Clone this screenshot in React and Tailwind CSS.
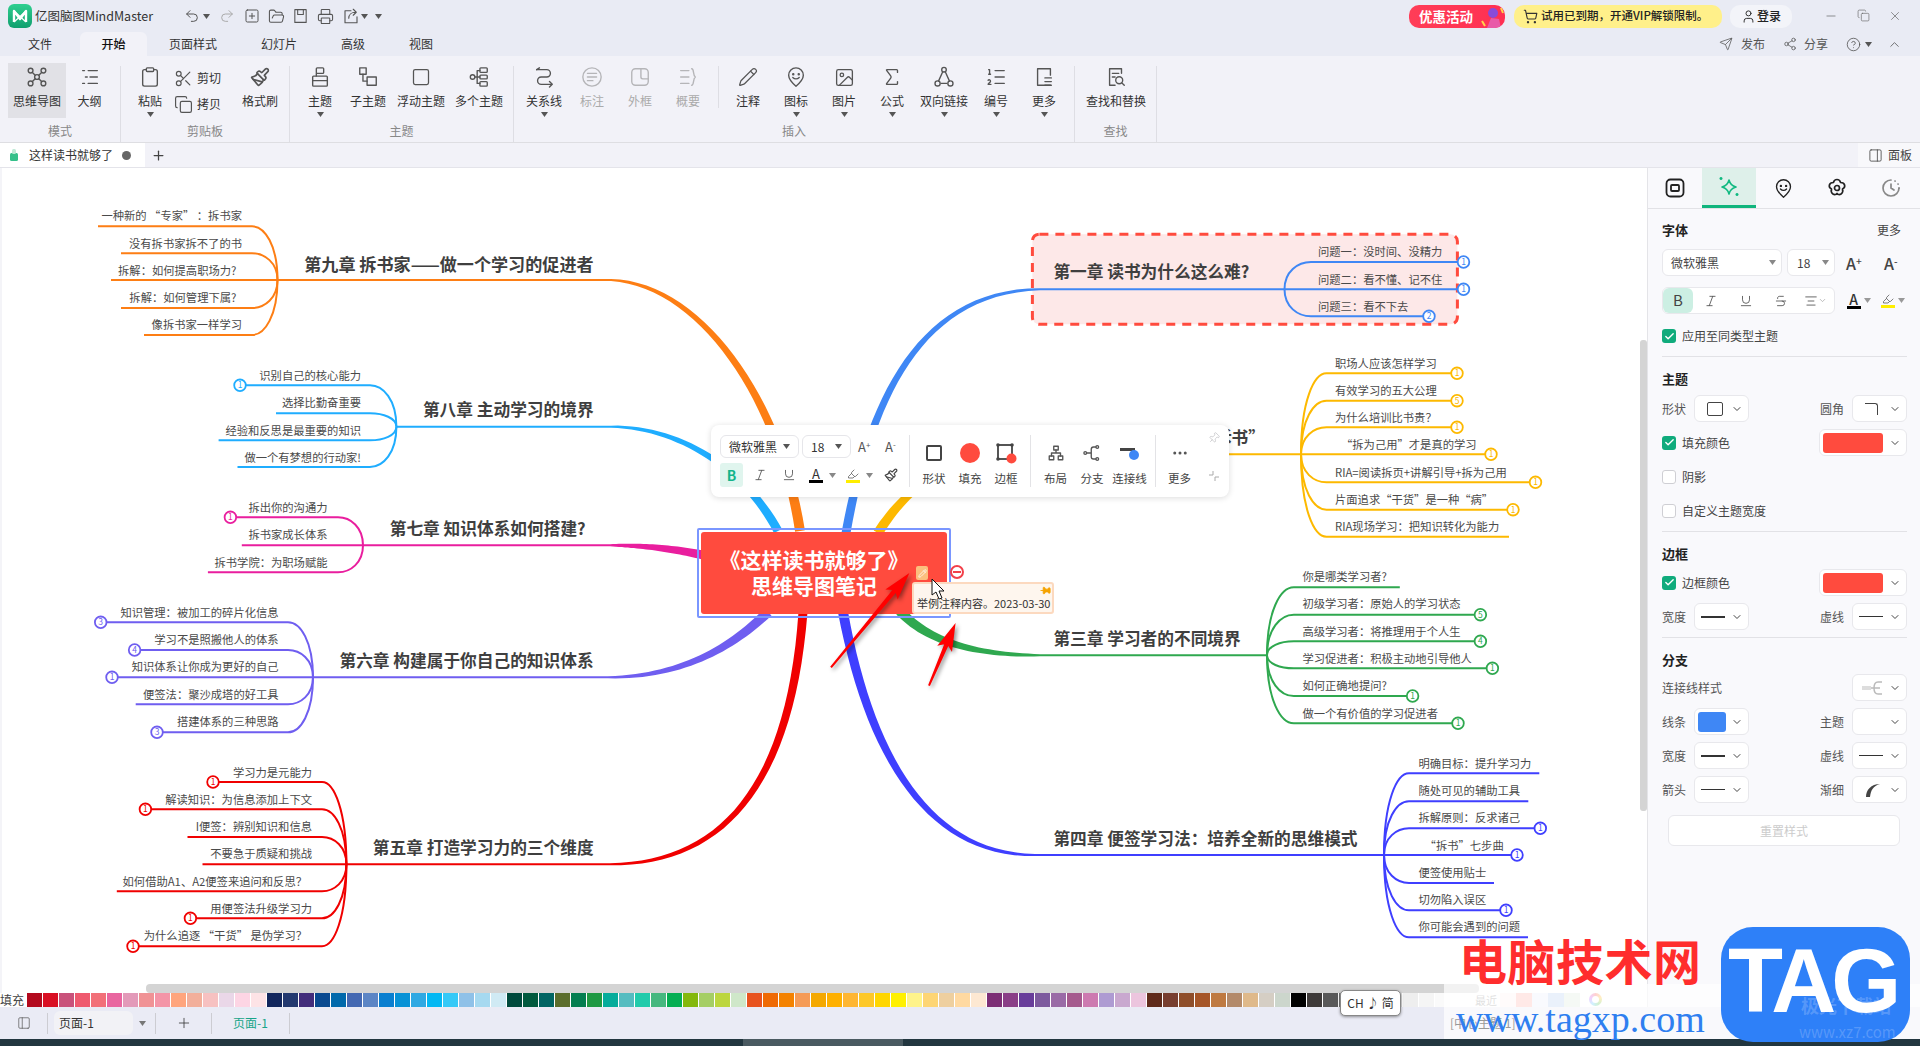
import React from "react";
import {
  Undo2, Redo2, SquarePlus, FolderOpen, Printer, Scissors, Copy, Clipboard, Square, Image, Sigma, ListOrdered, Pencil,
  Send, Share2, CircleHelp, ChevronUp, ChevronDown, Minus, X, User, ShoppingCart, Plus, Italic, Underline, Strikethrough,
  AlignCenter, Pin, MoreHorizontal, PanelRight, Check, Paintbrush, Highlighter,
} from "lucide-react";

const S = ({ size = 22, children, className = "", sw = 1.5 }) => (
  <svg width={size} height={size} viewBox="0 0 24 24" fill="none" stroke="currentColor" strokeWidth={sw} strokeLinecap="round" strokeLinejoin="round" className={className}>
    {children}
  </svg>
);

const Caret = ({ className = "text-[#555]" }) => (
  <svg width="7" height="5" viewBox="0 0 7 5" className={className}><path d="M0 0h7L3.5 5z" fill="currentColor" /></svg>
);

const MapIcon = () => <S><circle cx="5" cy="5" r="2.6" /><circle cx="19" cy="5" r="2.6" /><circle cx="5" cy="19" r="2.6" /><circle cx="19" cy="19" r="2.6" /><circle cx="12" cy="12" r="2.6" /><path d="M7 7l3 3M17 7l-3 3M7 17l3-3M17 17l-3-3" /></S>;
const OutlineIcon = () => <S><path d="M4 5h2M10 5h10M7 12h2M12 12h8M4 19h2M10 19h10" /></S>;
const ThemeIcon = () => <S><rect x="8" y="2" width="8" height="6" rx="1" /><rect x="4" y="11" width="16" height="11" rx="1" /><path d="M8 8v3M4 16h16" /></S>;
const SubIcon = () => <S><rect x="3" y="2" width="7" height="7" /><rect x="11" y="12" width="10" height="9" /><path d="M6.5 9v7.5H11" /></S>;
const MultiIcon = () => <S><rect x="13" y="2" width="8" height="5" rx="1" /><rect x="13" y="17" width="8" height="5" rx="1" /><circle cx="5" cy="12" r="2.5" /><rect x="13" y="10" width="8" height="4" rx="1" /><path d="M7.5 12H13M10 12V5h3M10 12v7h3" /></S>;
const RelIcon = () => <S><path d="M4 4h11a4 4 0 0 1 0 8H9a4 4 0 0 0 0 8h11" /><path d="M4 4l3-2M18 17l3 3-3 3" /></S>;
const CalloutIcon = () => <S><circle cx="12" cy="12" r="10" /><path d="M7 8h10M7 12h10M7 16h6" /></S>;
const BoundIcon = () => <S><rect x="3" y="3" width="18" height="18" rx="4" /><path d="M21 14h-6a2 2 0 0 1-2-2V3" /></S>;
const SummaryIcon = () => <S><path d="M4 5h9M4 12h9M4 19h9M16 3c3 0 1 7 4 9-3 2-1 9-4 9" /></S>;
const PinSmile = ({ size = 22 }) => <S size={size}><path d="M12 22S4 15 4 10a8 8 0 0 1 16 0c0 5-8 12-8 12z" /><circle cx="9" cy="9" r=".6" fill="currentColor" /><circle cx="15" cy="9" r=".6" fill="currentColor" /><path d="M8.5 12.5c2 2 5 2 7 0" /></S>;
const LinkIcon = () => <S><circle cx="12" cy="4" r="2.5" /><circle cx="5" cy="19" r="2.8" /><circle cx="19" cy="19" r="2.8" /><path d="M10.5 6.5L6 16.5M13.5 6.5L18 16.5M9 19h6" /></S>;
const MoreDoc = () => <S><path d="M19 21H5V3h14v7" /><path d="M13 13h7M13 17h7M13 21h7" /></S>;
const FindIcon = () => <S><path d="M18 8V3H5v18h6" /><path d="M8 8h7M8 12h3" /><circle cx="15.5" cy="15.5" r="3.8" /><path d="M18.5 18.5L21 21" /></S>;
const SaveIcon = () => <S size={18}><path d="M4 3h16v18H4z" /><path d="M8 3v7h8V3" /></S>;
const ExportIcon = () => <S size={18}><path d="M20 13v8H4V5h8" /><path d="M9 15c0-5 4-8 9-8M15 3l4 4-4 4" /></S>;

const Logo = () => (
  <div className="w-[24px] h-[24px] rounded-[6px] bg-gradient-to-b from-[#2fcf8f] to-[#0f9f6e] flex items-center justify-center">
    <svg width="18" height="18" viewBox="0 0 18 18" fill="none" stroke="#fff" strokeWidth="2.4" strokeLinejoin="round"><path d="M3 15V4l6 8 6-8v11" /><path d="M3 4l12 11M15 4L3 15" strokeWidth="1.2" /></svg>
  </div>
);

const RItem = ({ icon, label, w = 48, caret, gray }) => (
  <div className={`flex flex-col items-center shrink-0 ${gray ? "text-[#b5b5b8]" : "text-[#4a4a4a]"}`} style={{ width: w }}>
    <div className="h-[22px] mt-[3px] flex items-center justify-center text-[#555]" style={gray ? { color: "#b5b5b8" } : undefined}>{icon}</div>
    <div className={`text-[12px] leading-[16px] mt-[5px] whitespace-nowrap ${gray ? "text-[#aaa]" : "text-[#333]"}`}>{label}</div>
    {caret && <div className="mt-[3px] h-[5px] flex"><Caret /></div>}
  </div>
);

const Section = ({ w, label, children, last }) => (
  <div className={`h-[76px] shrink-0 flex flex-col justify-between ${last ? "" : "border-r border-[#dedee4]"}`} style={{ width: w }}>
    <div className="flex -mt-[3px] h-[60px]">{children}</div>
    <div className="text-center text-[12px] leading-[16px] text-[#888] pb-[3px]">{label}</div>
  </div>
);

const Ribbon = () => (
  <div className="h-[87px] bg-[#f2f2f8] border-b border-[#dedee2] pt-[10px] flex shrink-0">
    <Section w={121} label="模式">
      <div className="ml-[8px] w-[58px] h-[55px] bg-[#e1e1e6] flex justify-center"><RItem w={58} icon={<MapIcon />} label="思维导图" /></div>
      <RItem w={47} icon={<OutlineIcon />} label="大纲" />
    </Section>
    <Section w={169} label="剪贴板">
      <div className="ml-[5px] flex">
        <RItem icon={<Clipboard size={22} strokeWidth={1.5} />} label="粘贴" caret />
        <div className="w-[62px] flex flex-col text-[12px] text-[#333]">
          <div className="flex items-center gap-[4px] h-[26px] mt-[2px]"><Scissors size={19} strokeWidth={1.5} className="text-[#555]" /><span>剪切</span></div>
          <div className="flex items-center gap-[4px] h-[26px]"><Copy size={19} strokeWidth={1.5} className="text-[#555]" /><span>拷贝</span></div>
        </div>
        <RItem icon={<Paintbrush size={20} strokeWidth={2} />} label="格式刷" />
      </div>
    </Section>
    <Section w={224} label="主题">
      <div className="ml-[6px] flex">
        <RItem icon={<ThemeIcon />} label="主题" caret />
        <RItem icon={<SubIcon />} label="子主题" />
        <RItem w={58} icon={<Square size={20} strokeWidth={1.5} />} label="浮动主题" />
        <RItem w={58} icon={<MultiIcon />} label="多个主题" />
      </div>
    </Section>
    <Section w={561} label="插入">
      <div className="ml-[6px] flex">
        <RItem icon={<RelIcon />} label="关系线" caret />
        <RItem gray icon={<CalloutIcon />} label="标注" />
        <RItem gray icon={<BoundIcon />} label="外框" />
        <RItem gray icon={<SummaryIcon />} label="概要" />
        <div className="w-[12px] flex justify-center"><div className="w-px h-[42px] mt-[3px] bg-[#dedee4]" /></div>
        <RItem icon={<Pencil size={20} strokeWidth={1.5} />} label="注释" />
        <RItem icon={<PinSmile />} label="图标" caret />
        <RItem icon={<Image size={21} strokeWidth={1.5} />} label="图片" caret />
        <RItem icon={<Sigma size={22} strokeWidth={1.5} />} label="公式" caret />
        <RItem w={56} icon={<LinkIcon />} label="双向链接" caret />
        <RItem icon={<ListOrdered size={22} strokeWidth={1.5} />} label="编号" caret />
        <RItem icon={<MoreDoc />} label="更多" caret />
      </div>
    </Section>
    <Section w={82} label="查找">
      <RItem w={82} icon={<FindIcon />} label="查找和替换" />
    </Section>
  </div>
);

const TitleBar = () => (
  <div className="h-[32px] flex items-center shrink-0">
    <div className="ml-[8px]"><Logo /></div>
    <span className="ml-[3px] text-[12.5px] text-[#333] whitespace-nowrap">亿图脑图MindMaster</span>
    <div className="ml-[31px] flex items-center text-[#555]">
      <Undo2 size={16} strokeWidth={1.5} />
      <span className="ml-[3px]"><Caret /></span>
      <Redo2 size={16} strokeWidth={1.5} className="ml-[9px] text-[#aaa]" />
      <SquarePlus size={16} strokeWidth={1.5} className="ml-[9px]" />
      <FolderOpen size={17} strokeWidth={1.5} className="ml-[8px]" />
      <span className="ml-[7px] flex w-[17px]"><SaveIcon /></span>
      <Printer size={17} strokeWidth={1.5} className="ml-[8px]" />
      <span className="ml-[8px] flex"><ExportIcon /></span>
      <span className="ml-[1px]"><Caret /></span>
      <span className="ml-[7px]"><Caret /></span>
    </div>
    <div className="ml-auto flex items-center h-[23px]">
      <div className="w-[96px] h-[23px] rounded-[10px] bg-gradient-to-r from-[#ff3d57] to-[#ff2f52] flex items-center pl-[10px] relative overflow-hidden">
        <span className="text-[13.5px] font-bold text-white whitespace-nowrap">优惠活动</span>
        <svg width="26" height="23" viewBox="0 0 26 23" className="absolute right-0 top-0"><circle cx="14" cy="8" r="5" fill="#8a4bd8" /><path d="M8 23l4-10 8 1 2 9z" fill="#e85aa8" /><path d="M3 16l3 5M22 3l2 5" stroke="#ffd24a" strokeWidth="2" /></svg>
      </div>
      <div className="ml-[9px] w-[208px] h-[23px] rounded-[10px] bg-[#fff08a] flex items-center pl-[9px]">
        <ShoppingCart size={15} strokeWidth={1.8} className="text-[#333]" />
        <span className="ml-[3px] text-[11.5px] font-medium text-[#222] whitespace-nowrap">试用已到期，开通VIP解锁限制。</span>
      </div>
      <div className="ml-[8px] w-[62px] h-[23px] rounded-[10px] bg-[#f3f4f9] flex items-center justify-center gap-[1px]">
        <User size={15} strokeWidth={1.6} className="text-[#333]" />
        <span className="text-[12px] font-medium text-[#222]">登录</span>
      </div>
      <div className="ml-[23px] flex text-[#666]">
        <div className="w-[32px] flex justify-center"><Minus size={14} strokeWidth={1.2} /></div>
        <div className="w-[32px] flex justify-center"><Copy size={13} strokeWidth={1.2} /></div>
        <div className="w-[32px] flex justify-center"><X size={14} strokeWidth={1.2} /></div>
      </div>
      <div className="w-[9px]" />
    </div>
  </div>
);

const TabRow = () => {
  const tabs = [["文件", 80], ["开始", 67, 1], ["页面样式", 92], ["幻灯片", 80], ["高级", 68], ["视图", 68]];
  return (
    <div className="h-[24px] flex shrink-0 text-[12px] text-[#333]">
      {tabs.map(([t, w, a]) => (
        <div key={t} className={`flex items-center justify-center ${a ? "bg-[#f2f2f8] rounded-t-[6px] font-medium text-[#111]" : ""}`} style={{ width: w }}>{t}</div>
      ))}
      <div className="ml-auto flex items-center text-[#555] pr-[18px]">
        <Send size={14} strokeWidth={1.3} />
        <span className="ml-[8px] w-[24px] whitespace-nowrap">发布</span>
        <Share2 size={14} strokeWidth={1.3} className="ml-[18px]" />
        <span className="ml-[7px] w-[24px] whitespace-nowrap">分享</span>
        <CircleHelp size={15} strokeWidth={1.3} className="ml-[18px]" />
        <span className="ml-[4px]"><Caret /></span>
        <ChevronUp size={15} strokeWidth={1.3} className="ml-[15px]" />
      </div>
    </div>
  );
};

const DocTabs = () => (
  <div className="h-[25px] bg-[#f2f2f8] border-b border-[#e4e4ea] flex shrink-0">
    <div className="w-[145px] bg-white flex items-center pl-[10px] text-[12px] text-[#333]">
      <svg width="8" height="12" viewBox="0 0 8 12"><rect x="0" y="4" width="8" height="8" rx="1.5" fill="#35c08a" /><rect x="2" y="0" width="4" height="5" rx="1.5" fill="#bfe9d6" /></svg>
      <span className="ml-[11px] whitespace-nowrap">这样读书就够了</span>
      <span className="ml-[9px] w-[9px] h-[9px] rounded-full bg-[#666]" />
    </div>
    <div className="ml-[6px] flex items-center text-[#444]"><Plus size={15} strokeWidth={2} /></div>
    <div className="ml-auto w-[62px] bg-[#f8f8fb] flex items-center pl-[10px] gap-[5px] text-[12px] text-[#444]">
      <PanelRight size={15} strokeWidth={1.3} />
      <span>面板</span>
    </div>
  </div>
);

/* ---------- mind map ---------- */

const BR = [
  { c: "#fd7e14", title: "第九章 拆书家——做一个学习的促进者", fs: 17.1, tr: 593.6, tcy: 265, j: 277.5, s: 252, ty: 281, L: 1, te: 611, tw: 10, cb: [[611, 281], [700, 285], [780, 400], [800, 532]], text: 242,
    subs: [[227.3, 98, 0, "一种新的 “专家” ：拆书家", 216], [254.3, 121, 0, "没有拆书家拆不了的书", 244], [281, 111, 0, "拆解：如何提高职场力?", 271, 236.4], [309, 121, 0, "拆解：如何管理下属?", 297.7, 236.4], [336, 144, 0, "像拆书家一样学习", 325]] },
  { c: "#1fadff", title: "第八章 主动学习的境界", tr: 593.6, tcy: 410, j: 396.4, s: 370, ty: 427.7, L: 1, te: 611, tw: 9, cb: [[611, 427.7], [680, 428], [745, 470], [778, 532]], text: 361,
    subs: [[386.3, 240, 1, "识别自己的核心能力", 376], [414.3, 276, 0, "选择比勤奋重要", 402.7], [441.3, 218.6, 0, "经验和反思是最重要的知识", 430.7], [468, 237.5, 0, "做一个有梦想的行动家!", 458]] },
  { c: "#e91e9e", title: "第七章 知识体系如何搭建?", tr: 585.7, tcy: 529.3, j: 363, s: 338, ty: 546.3, L: 1, te: 610, tw: 9, cb: [[610, 546.3], [640, 546.3], [670, 549], [703, 556]], text: 327.5,
    subs: [[518.3, 230.4, 1, "拆出你的沟通力", 508], [546.3, 241.8, 0, "拆书家成长体系", 535], [573.3, 207.9, 0, "拆书学院：为职场赋能", 562.7]] },
  { c: "#6f5ef0", title: "第六章 构建属于你自己的知识体系", tr: 593.6, tcy: 661, j: 313, s: 288, ty: 678.3, L: 1, te: 608, tw: 10, cb: [[608, 678.3], [680, 678], [730, 650], [768, 613]], text: 278.6,
    subs: [[623.3, 100.7, 3, "知识管理：被加工的碎片化信息", 612.7], [651, 134.6, 4, "学习不是照搬他人的体系", 640], [678.3, 112, 1, "知识体系让你成为更好的自己", 667.3], [705.3, 135.7, 0, "便签法：聚沙成塔的好工具", 695], [733.3, 157, 3, "搭建体系的三种思路", 722]] },
  { c: "#f00000", title: "第五章 打造学习力的三个维度", tr: 593.6, tcy: 848.3, j: 346.4, s: 322, ty: 865.3, L: 1, te: 610, tw: 9, cb: [[610, 865.3], [720, 865], [790, 790], [803, 613]], text: 312,
    subs: [[783, 213, 1, "学习力是元能力", 773], [810.3, 145.4, 1, "解读知识：为信息添加上下文", 800], [838, 187.5, 0, "I便签：辨别知识和信息", 827], [865.3, 202.5, 0, "不要急于质疑和挑战", 854], [892.3, 116.8, 0, "如何借助A1、A2便签来追问和反思？", 882, 307], [919.3, 190.4, 1, "用便签法升级学习力", 909], [947.3, 133, 1, "为什么追逐 “干货” 是伪学习？", 936, 307]] },
  { c: "#3f87f5", title: "第一章 读书为什么这么难?", tl: 1053.4, tcy: 271.7, j: 1284.5, s: 1311, ty: 290.3, te: 1040, tw: 9, cb: [[1040, 290.3], [920, 292], [870, 400], [846, 534]], text: 1318,
    subs: [[263, 1463.5, 1, "问题一：没时间、没精力", 252], [290.3, 1463.5, 1, "问题二：看不懂、记不住", 280], [317.3, 1429, 2, "问题三：看不下去", 307]] },
  { c: "#fdb900", title: "第二章 职场人如何“拆书”", tr: 1265, tcy: 438.3, j: 1301, s: 1326.5, ty: 455.3, te: 1010, tw: 10, cb: [[1010, 455.3], [950, 456], [905, 490], [878, 534]], text: 1335,
    subs: [[374.3, 1457, 1, "职场人应该怎样学习", 363.7], [401.7, 1457, 5, "有效学习的五大公理", 391], [428.3, 1457, 1, "为什么培训比书贵？", 418], [455.3, 1491, 1, "“拆为己用”才是真的学习", 445, 1341], [483.3, 1535.5, 1, "RIA=阅读拆页+讲解引导+拆为己用", 473], [510.7, 1513, 1, "片面追求“干货”是一种“病”", 500], [537.7, 1509, 0, "RIA现场学习：把知识转化为能力", 527]] },
  { c: "#2fa84f", title: "第三章 学习者的不同境界", tl: 1053.4, tcy: 639.3, j: 1267, s: 1293.8, ty: 656.3, te: 1040, tw: 10, cb: [[1040, 656.3], [980, 656], [930, 645], [900, 612]], text: 1302.4,
    subs: [[588.3, 1399.8, 0, "你是哪类学习者?", 577], [615.7, 1480.4, 5, "初级学习者：原始人的学习状态", 604], [642.3, 1480.4, 4, "高级学习者：将推理用于个人生", 632], [669.3, 1492.4, 1, "学习促进者：积极主动地引导他人", 659], [697, 1412.6, 1, "如何正确地提问?", 686], [724.3, 1458, 1, "做一个有价值的学习促进者", 714]] },
  { c: "#3f3fff", title: "第四章 便签学习法：培养全新的思维模式", tl: 1053.4, tcy: 839, j: 1384, s: 1409, ty: 856, te: 1035, tw: 10, cb: [[1035, 856], [930, 856], [870, 760], [843, 613]], text: 1418.4,
    subs: [[774.3, 1539.3, 0, "明确目标：提升学习力", 764], [802.3, 1528.3, 0, "随处可见的辅助工具", 791], [829.3, 1540.3, 1, "拆解原则：反求诸己", 818], [856, 1517, 1, "“拆书”七步曲", 846, 1424.6], [884, 1494, 0, "便签使用贴士", 873], [911.3, 1506, 1, "切勿陷入误区", 900], [938.3, 1528, 0, "你可能会遇到的问题", 927]] },
];

function tapered(cb, w1) {
  const [p0, p1, p2, p3] = cb;
  const a = [], b = [];
  const n = 30;
  for (let i = 0; i <= n; i++) {
    const t = i / n, u = 1 - t;
    const x = u * u * u * p0[0] + 3 * u * u * t * p1[0] + 3 * u * t * t * p2[0] + t * t * t * p3[0];
    const y = u * u * u * p0[1] + 3 * u * u * t * p1[1] + 3 * u * t * t * p2[1] + t * t * t * p3[1];
    let dx = 3 * u * u * (p1[0] - p0[0]) + 6 * u * t * (p2[0] - p1[0]) + 3 * t * t * (p3[0] - p2[0]);
    let dy = 3 * u * u * (p1[1] - p0[1]) + 6 * u * t * (p2[1] - p1[1]) + 3 * t * t * (p3[1] - p2[1]);
    const l = Math.hypot(dx, dy) || 1;
    dx /= l; dy /= l;
    const w = (2 + (w1 - 2) * Math.pow(t, 0.8)) / 2;
    a.push(`${(x - dy * w).toFixed(1)} ${(y + dx * w).toFixed(1)}`);
    b.unshift(`${(x + dy * w).toFixed(1)} ${(y - dx * w).toFixed(1)}`);
  }
  return `M${a.join("L")}L${b.join("L")}Z`;
}

function arrow(x1, y1, x2, y2) {
  const l = Math.hypot(x2 - x1, y2 - y1);
  const ux = (x2 - x1) / l, uy = (y2 - y1) / l, nx = -uy, ny = ux;
  const P = (a, n) => `${(x1 + ux * a + nx * n).toFixed(1)} ${(y1 + uy * a + ny * n).toFixed(1)}`;
  return `M${P(0, -1)}L${P(l - 24, -2.2)}L${P(l - 28, -8)}L${P(l, 0)}L${P(l - 28, 8)}L${P(l - 24, 2.2)}L${P(0, 1)}Z`;
}

const MindWires = () => (
  <svg className="absolute left-0 top-0" width="1640" height="816" viewBox="0 168 1640 816">
    <rect x="1032.4" y="235.3" width="425" height="90" rx="7" fill="#fde8e8" stroke="#ff4b3e" strokeWidth="3" strokeDasharray="9 7" />
    {BR.map((b) => (
      <g key={b.title}>
        <path d={tapered(b.cb, b.tw)} fill={b.c} />
        <path d={`M${b.te} ${b.ty}H${b.j}`} stroke={b.c} strokeWidth="2" fill="none" />
        {b.subs.map((s) => {
          const straight = Math.abs(s[0] - b.ty) < 1;
          const d = straight
            ? `M${b.j} ${b.ty}H${s[1]}`
            : `M${b.j} ${b.ty}C${b.j} ${s[0] + (b.ty - s[0]) * 0.35} ${b.s + (b.j - b.s) * 0.5} ${s[0]} ${b.s} ${s[0]}H${s[1]}`;
          return <path key={s[3]} d={d} stroke={b.c} strokeWidth="2" fill="none" />;
        })}
        {b.subs.filter((s) => s[2]).map((s) => (
          <g key={s[3]}>
            <circle cx={s[1]} cy={s[0]} r="5.8" fill="#fff" stroke={b.c} strokeWidth="1.8" />
            <text x={s[1]} y={s[0] + 3} textAnchor="middle" fontSize="8.5" fill={b.c}>{s[2]}</text>
          </g>
        ))}
      </g>
    ))}
  </svg>
);

const MindText = () => (
  <>
    {BR.map((b) => (
      <React.Fragment key={b.title}>
        <div
          className={`absolute whitespace-nowrap leading-[22px] font-bold text-[#3f3f3f] -translate-y-1/2 ${b.tl ? "" : "-translate-x-full"}`}
          style={{ left: b.tl || b.tr, top: b.tcy - 168, fontSize: b.fs || 16.7 }}
        >{b.title}</div>
        {b.subs.map((s) => (
          <div
            key={s[3]}
            className={`absolute whitespace-nowrap text-[11.3px] leading-[14px] text-[#4a4a4a] -translate-y-1/2 ${b.L ? "-translate-x-full" : ""}`}
            style={{ left: s[5] || b.text, top: s[4] - 168 }}
          >{s[3]}</div>
        ))}
      </React.Fragment>
    ))}
  </>
);

const CenterNode = () => (
  <div className="absolute left-[697px] top-[361px] w-[254px] h-[90px] border-2 border-[#7a96ff] rounded-[2px] p-[2px]">
    <div className="w-full h-full bg-[#ff4b3e] rounded-[3px] pr-[20px] pb-[2px] flex flex-col items-center justify-center text-white font-bold text-[21px] leading-[26.5px]">
      <div>《这样读书就够了》</div>
      <div>思维导图笔记</div>
    </div>
  </div>
);

const NoteBadges = () => (
  <>
    <div className="absolute left-[916px] top-[399px] w-[12px] h-[14px] rounded-[2px] bg-[#fcbf7e] flex items-center justify-center">
      <Pencil size={9} strokeWidth={2} className="text-white" />
    </div>
    <div className="absolute left-[950px] top-[398px] w-[14px] h-[14px] rounded-full border-2 border-[#f2404a] bg-white flex items-center justify-center">
      <div className="w-[8px] h-[2px] bg-[#f2404a]" />
    </div>
    <div className="absolute left-[912px] top-[415px] w-[142px] h-[32px] rounded-[3px] bg-[#fef6ee] border-2 border-[#fcd9bf]">
      <div className="absolute right-[1px] top-[1px] text-[#f5a300]"><Pin size={11} fill="currentColor" className="rotate-90" /></div>
      <div className="absolute left-[3px] bottom-[1px] text-[11px] leading-[15px] text-[#333] whitespace-nowrap">举例注释内容。2023-03-30</div>
    </div>
  </>
);

const ToolCol = ({ w, icon, label }) => (
  <div className="flex flex-col items-center shrink-0 text-[#555]" style={{ width: w }}>
    <div className="h-[24px] mt-[6px] flex items-center justify-center">{icon}</div>
    <div className="mt-[5px] text-[11.5px] leading-[16px] text-[#444] whitespace-nowrap">{label}</div>
  </div>
);

const FloatBar = () => (
  <div className="absolute left-[711px] top-[258px] w-[518px] h-[72px] bg-white rounded-[8px] shadow-[0_1px_6px_rgba(0,0,0,0.14)] flex pt-[10px]">
    <div className="w-[198px] pl-[9px] shrink-0">
      <div className="flex items-center h-[23px] text-[12px] text-[#333]">
        <div className="w-[79px] h-[23px] border border-[#e6e6ea] rounded-[6px] flex items-center justify-between px-[8px]"><span className="whitespace-nowrap">微软雅黑</span><Caret /></div>
        <div className="ml-[3px] w-[49px] h-[23px] border border-[#e6e6ea] rounded-[6px] flex items-center justify-between px-[8px]"><span>18</span><Caret /></div>
        <span className="ml-[7px] text-[13px] text-[#555] w-[17px]">A<sup className="text-[8px]">+</sup></span>
        <span className="ml-[10px] text-[13px] text-[#555] w-[17px]">A<sup className="text-[8px]">-</sup></span>
      </div>
      <div className="flex items-center h-[24px] mt-[5px] text-[#555]">
        <div className="w-[23px] h-[24px] rounded-[3px] bg-[#e0f5ee] text-[#14b48a] font-bold text-[14px] flex items-center justify-center">B</div>
        <div className="ml-[5px] w-[23px] flex justify-center"><Italic size={14} strokeWidth={1.5} /></div>
        <div className="ml-[6px] w-[23px] flex justify-center"><Underline size={14} strokeWidth={1.5} /></div>
        <div className="ml-[5px] w-[33px] flex items-center">
          <div className="w-[22px] flex flex-col items-center"><span className="text-[13px] leading-[13px] text-[#333]">A</span><span className="w-[14px] h-[3px] bg-black" /></div>
          <span className="ml-[2px]"><Caret className="text-[#888]" /></span>
        </div>
        <div className="ml-[4px] w-[34px] flex items-center">
          <div className="w-[22px] flex flex-col items-center"><Highlighter size={12} strokeWidth={1.5} /><span className="w-[14px] h-[3px] bg-[#ffee00]" /></div>
          <span className="ml-[2px]"><Caret className="text-[#888]" /></span>
        </div>
        <div className="ml-[4px] w-[22px] flex justify-center"><Paintbrush size={14} strokeWidth={2} className="text-[#444]" /></div>
      </div>
    </div>
    <div className="w-px h-[52px] bg-[#e3e3e6] shrink-0" />
    <div className="ml-[6px] flex">
      <ToolCol w={36} label="形状" icon={<div className="w-[16px] h-[16px] border-2 border-[#444] rounded-[2px]" />} />
      <ToolCol w={36} label="填充" icon={<div className="w-[20px] h-[20px] rounded-full bg-[#ff4b3e]" />} />
      <ToolCol w={36} label="边框" icon={
        <svg width="22" height="22" viewBox="0 0 22 22"><rect x="3" y="3" width="14" height="14" fill="none" stroke="#444" strokeWidth="1.8" /><circle cx="3" cy="3" r="1.8" fill="#444" /><circle cx="17" cy="3" r="1.8" fill="#444" /><circle cx="3" cy="17" r="1.8" fill="#444" /><circle cx="16.5" cy="16.5" r="5" fill="#ff4b3e" /></svg>
      } />
    </div>
    <div className="ml-[6px] w-px h-[52px] bg-[#e3e3e6] shrink-0" />
    <div className="ml-[6px] flex">
      <ToolCol w={37} label="布局" icon={<S size={18} sw={1.8}><rect x="9" y="3" width="6" height="5" /><rect x="3" y="16" width="6" height="5" /><rect x="15" y="16" width="6" height="5" /><path d="M12 8v4M6 16v-4h12v4" /></S>} />
      <ToolCol w={36} label="分支" icon={<S size={18} sw={1.8}><circle cx="3" cy="12" r="1.8" /><circle cx="19" cy="4" r="1.8" /><circle cx="19" cy="20" r="1.8" /><path d="M5 12h6M17 4h-3q-3 0-3 3v10q0 3 3 3h3" /></S>} />
      <ToolCol w={39} label="连接线" icon={
        <svg width="22" height="20" viewBox="0 0 22 20"><rect x="1" y="5" width="15" height="3" fill="#444" /><circle cx="15" cy="12" r="5" fill="#3f87f5" /></svg>
      } />
    </div>
    <div className="ml-[6px] w-px h-[52px] bg-[#e3e3e6] shrink-0" />
    <div className="ml-[5px] flex">
      <ToolCol w={37} label="更多" icon={<MoreHorizontal size={18} strokeWidth={2} />} />
    </div>
    <div className="flex-1 flex flex-col items-center text-[#c4c4c8] -mt-[5px]">
      <Pin size={12} strokeWidth={1.5} className="rotate-45 mt-[2px]" />
      <svg width="12" height="12" viewBox="0 0 12 12" className="mt-[26px]" fill="none" stroke="#aaa"><path d="M1 5h4V1M11 7H7v4" /></svg>
    </div>
  </div>
);

const Arrows = () => (
  <svg className="absolute left-0 top-0 drop-shadow-[2px_2px_2px_rgba(0,0,0,0.45)]" width="1640" height="816" viewBox="0 168 1640 816">
    <path d={arrow(831, 668.3, 909.4, 574)} fill="#f00" />
    <path d={arrow(929, 686.7, 955.6, 624)} fill="#f00" />
  </svg>
);

const Cursor = () => (
  <svg className="absolute left-[931px] top-[411px]" width="14" height="22" viewBox="0 0 14 22"><path d="M1 1v16l4-3 3 7 3-1-3-7h5z" fill="#fff" stroke="#111" strokeWidth="1" strokeLinejoin="round" /></svg>
);

/* ---------- palette ---------- */
const COLORS = [
  "#b30a1e", "#d90f24", "#c9527b", "#ef5a6f", "#f27079", "#e966a0", "#e39ab9", "#f09295", "#f495a7", "#ffa57d", "#f2af9b", "#f7c1c1", "#ead7e8", "#fdd5e4", "#fde3e6",
  "#12265c", "#23396f", "#432d7b", "#0a4a90", "#0169ab", "#4468b2", "#5c85c5", "#0a7fd0", "#0892d6", "#2fa9e3", "#03b8f3", "#35c9f7", "#8fc1e8", "#a6d9f0", "#d0eaf4",
  "#004a3c", "#015a3e", "#016563", "#5b6d2c", "#047e50", "#1f9943", "#05ac9b", "#55bcc0", "#21cbab", "#46b87f", "#05ae52", "#84b80c", "#a5ce64", "#bcd63e", "#cfe7c9",
  "#e8531f", "#ef6a04", "#f48200", "#f59b56", "#f4a800", "#feb000", "#feb632", "#fdc828", "#ffd600", "#fff000", "#fef38b", "#fdd574", "#eecf9f", "#ffd9a1", "#fde8d2",
  "#7c2e75", "#8a3e87", "#683d9a", "#7d5a9e", "#9a6ba6", "#a55a8d", "#cd7ab0", "#ae9bd2", "#c9a8cf", "#ecc5de",
  "#5f2a1a", "#783e2f", "#8f4e2a", "#a65628", "#bf7a41", "#b38a6a", "#dfb98a", "#d5cec4", "#ccd6cc",
  "#000000", "#3e3a39", "#595959", "#777777", "#999999", "#cccfcd", "#dcdcdc", "#eeeeee", "#f5f5f5", "#fafafa",
];
const RECENT = ["#fff0f0", "#ffb5b0", "#e9effb", "#b7cff0", "#dcebdc"];

const Palette = () => (
  <div className="h-[14px] flex items-stretch shrink-0 bg-white">
    <div className="w-[27px] text-[12px] leading-[14px] text-[#444] whitespace-nowrap">填充</div>
    {COLORS.map((c, i) => <div key={i} className="w-[16px] border-r border-white" style={{ backgroundColor: c }} />)}
    <div className="ml-[24px] w-[25px] text-[11px] leading-[14px] text-[#999]">最近</div>
    {RECENT.map((c) => <div key={c} className="w-[16px]" style={{ backgroundColor: c }} />)}
    <div className="ml-[9px] w-[13px] h-[13px] rounded-full bg-[conic-gradient(#f66,#fc3,#6c6,#6cf,#c6f,#f66)] p-[3px]"><div className="w-full h-full rounded-full bg-white" /></div>
  </div>
);

const Canvas = () => (
  <div className="flex-1 flex flex-col min-w-0">
    <div className="flex-1 relative bg-white overflow-hidden">
      <div className="absolute left-0 -top-px w-full h-full">
        <MindWires />
        <MindText />
        <CenterNode />
        <NoteBadges />
        <FloatBar />
        <Arrows />
        <Cursor />
      </div>
      <div className="absolute left-0 top-0 w-[2px] h-full bg-[#f4f4f8]" />
      <div className="absolute left-[146px] top-[816px] w-[1333px] h-[9px] rounded-[4px] bg-[#d4d4d4]" />
      <div className="absolute right-0 top-[172px] w-[7px] h-[471px] rounded-[3px] bg-[#d4d4d4]" />
    </div>
    <Palette />
  </div>
);

/* ---------- right panel ---------- */
const Box = ({ w = 55, children, arrow = true, px = 5 }) => (
  <div className="h-[27px] bg-white border border-[#e8e8ec] rounded-[6px] flex items-center justify-between shrink-0" style={{ width: w, paddingLeft: px, paddingRight: 5 }}>
    {children}
    {arrow && <ChevronDown size={12} strokeWidth={2} className="text-[#444] shrink-0" />}
  </div>
);
const Lab = ({ children, w = 32 }) => <span className="text-[12px] text-[#555] whitespace-nowrap" style={{ width: w }}>{children}</span>;
const Chk = ({ on, label }) => (
  <div className="flex items-center h-[14px]">
    {on ? (
      <span className="w-[14px] h-[14px] rounded-[3px] bg-[#10ab7c] flex items-center justify-center"><Check size={11} strokeWidth={3} className="text-white" /></span>
    ) : (
      <span className="w-[14px] h-[14px] rounded-[3px] border border-[#cfcfd4] bg-white" />
    )}
    <span className="ml-[6px] text-[12px] text-[#444] whitespace-nowrap">{label}</span>
  </div>
);
const H = ({ children, className = "" }) => <div className={`text-[13px] leading-[16px] font-bold text-[#222] ${className}`}>{children}</div>;
const Line = ({ h = 1 }) => <div className="w-[24px] bg-[#333]" style={{ height: h }} />;
const Swatch = ({ w, c }) => <div className="h-[20px] rounded-[3px]" style={{ width: w, backgroundColor: c }} />;
const Rule = ({ className }) => <div className={`h-px bg-[#e2e2e6] ${className}`} />;
const Row = ({ children, className = "" }) => <div className={`flex items-center justify-between h-[27px] ${className}`}>{children}</div>;
const Pair = ({ children }) => <div className="flex items-center">{children}</div>;

const Panel = () => (
  <div className="w-[273px] shrink-0 border-l border-[#e4e4e8] bg-[#f9f9fc] flex flex-col">
    <div className="h-[41px] flex border-b border-[#e2e2e6] shrink-0">
      <div className="w-[54px] flex items-center justify-center text-[#222]">
        <svg width="20" height="20" viewBox="0 0 20 20" fill="none" stroke="currentColor" strokeWidth="1.8"><rect x="1.5" y="1.5" width="17" height="17" rx="4" /><rect x="6" y="7" width="8" height="6" rx="1" /></svg>
      </div>
      <div className="w-[54px] bg-[#def0ea] border-b-[3px] border-[#0fb57c] flex items-center justify-center text-[#10b981]">
        <svg width="24" height="24" viewBox="0 0 24 24" fill="none" stroke="currentColor" strokeWidth="1.6" strokeLinejoin="round"><path d="M12 5c1 4 3 6 7 7-4 1-6 3-7 7-1-4-3-6-7-7 4-1 6-3 7-7z" /><path d="M4 2v3M2.5 3.5h3M20 18v3M18.5 19.500h3" /></svg>
      </div>
      <div className="w-[54px] flex items-center justify-center text-[#222]"><PinSmile size={21} /></div>
      <div className="w-[54px] flex items-center justify-center text-[#222]">
        <svg width="20" height="20" viewBox="0 0 20 20" fill="none" stroke="currentColor" strokeWidth="1.7" strokeLinejoin="round"><path d="M10 1.500c2 0 3.200 1.500 3.600 3c1.600 0 3.500.6 4 2.500c.5 2-.9 3.400-2.100 4c.5 1.500.5 3.500-1.500 5c-1.500 1-3.400.5-4-.5c-.6 1-2.500 1.500-4 .5c-2-1.500-2-3.500-1.500-5c-1.200-.6-2.600-2-2.100-4c.5-1.900 2.400-2.500 4-2.500c.4-1.500 1.600-3 3.600-3z" /><circle cx="10" cy="10" r="2.500" /></svg>
      </div>
      <div className="w-[54px] flex items-center justify-center text-[#888]">
        <svg width="20" height="20" viewBox="0 0 20 20" fill="none" stroke="currentColor" strokeWidth="1.7" strokeLinecap="round"><path d="M10 2a8 8 0 1 0 8 8" /><path d="M10 6v4l3 2M14 3l.1.1M17 6l.1.1M18 10l.1.1" /></svg>
      </div>
    </div>
    <div className="pl-[14px] pr-[13px]">
      <div className="mt-[13px] pr-[6px] flex justify-between items-center"><H>字体</H><span className="text-[12px] leading-[16px] text-[#444]">更多</span></div>
      <div className="mt-[11px] flex items-center text-[12px] text-[#444]">
        <Box w={120} arrow={false} px={8}><span className="whitespace-nowrap">微软雅黑</span><Caret className="text-[#888]" /></Box>
        <div className="ml-[5px]"><Box w={48} arrow={false} px={9}><span>18</span><Caret className="text-[#888]" /></Box></div>
        <span className="ml-[11px] text-[16px] font-medium text-[#444] w-[18px] whitespace-nowrap">A<sup className="text-[10px]">+</sup></span>
        <span className="ml-[20px] text-[16px] font-medium text-[#444] w-[18px] whitespace-nowrap">A<sup className="text-[10px]">-</sup></span>
      </div>
      <div className="mt-[11px] flex items-center">
        <div className="w-[173px] h-[27px] bg-white border border-[#e8e8ec] rounded-[6px] flex items-center text-[#555]">
          <div className="w-[30px] h-[25px] rounded-[6px] bg-[#ccefe3] text-[#444] text-[15px] flex items-center justify-center">B</div>
          <div className="w-[35px] flex justify-center"><Italic size={14} strokeWidth={1.5} /></div>
          <div className="w-[35px] flex justify-center"><Underline size={14} strokeWidth={1.5} /></div>
          <div className="w-[35px] flex justify-center"><Strikethrough size={14} strokeWidth={1.5} /></div>
          <div className="w-[34px] flex items-center justify-center"><AlignCenter size={14} strokeWidth={1.5} /><ChevronDown size={9} className="text-[#aaa]" /></div>
        </div>
        <div className="ml-[11px] flex items-center w-[31px]">
          <div className="flex flex-col items-center w-[15px]"><span className="text-[14px] leading-[14px] font-medium text-[#333]">A</span><span className="w-[14px] h-[3px] bg-black" /></div>
          <span className="ml-[3px]"><Caret className="text-[#999]" /></span>
        </div>
        <div className="ml-[3px] flex items-center">
          <div className="flex flex-col items-center w-[15px]"><Highlighter size={12} strokeWidth={1.5} className="text-[#555]" /><span className="w-[14px] h-[3px] bg-[#ffee00]" /></div>
          <span className="ml-[3px]"><Caret className="text-[#999]" /></span>
        </div>
      </div>
      <div className="mt-[15px]"><Chk on label="应用至同类型主题" /></div>
      <Rule className="mt-[13px]" />
      <H className="mt-[14px]">主题</H>
      <Row className="mt-[8px]">
        <Pair><Lab>形状</Lab><Box px={12}><div className="w-[16px] h-[14px] border-[1.5px] border-[#444] rounded-[2px]" /></Box></Pair>
        <Pair><Lab>圆角</Lab><Box px={12}><div className="w-[13px] h-[12px] border-t-[1.5px] border-r-[1.5px] border-[#444] rounded-tr-[3px]" /></Box></Pair>
      </Row>
      <Row className="mt-[7px]">
        <Chk on label="填充颜色" />
        <Box w={88} px={3}><Swatch w={60} c="#ff4b3e" /></Box>
      </Row>
      <div className="mt-[14px]"><Chk label="阴影" /></div>
      <div className="mt-[20px]"><Chk label="自定义主题宽度" /></div>
      <Rule className="mt-[13px]" />
      <H className="mt-[14px]">边框</H>
      <Row className="mt-[7px]">
        <Chk on label="边框颜色" />
        <Box w={88} px={3}><Swatch w={60} c="#ff4b3e" /></Box>
      </Row>
      <Row className="mt-[7px]">
        <Pair><Lab>宽度</Lab><Box px={6}><Line h={2} /></Box></Pair>
        <Pair><Lab>虚线</Lab><Box px={6}><Line /></Box></Pair>
      </Row>
      <Rule className="mt-[7px]" />
      <H className="mt-[14px]">分支</H>
      <Row className="mt-[6px]">
        <span className="text-[12px] text-[#555] whitespace-nowrap">连接线样式</span>
        <Box px={9}>
          <svg width="22" height="16" viewBox="0 0 22 16" fill="none" stroke="#bbb" strokeWidth="1.5"><path d="M0 8h9" strokeWidth="4" stroke="#ddd" /><path d="M9 8h9M20 2h-4q-4 0-4 6t4 6h4" /></svg>
        </Box>
      </Row>
      <Row className="mt-[7px]">
        <Pair><Lab>线条</Lab><Box px={3}><Swatch w={28} c="#3f87f5" /></Box></Pair>
        <Pair><Lab>主题</Lab><Box><span /></Box></Pair>
      </Row>
      <Row className="mt-[7px]">
        <Pair><Lab>宽度</Lab><Box px={6}><Line h={2} /></Box></Pair>
        <Pair><Lab>虚线</Lab><Box px={6}><Line /></Box></Pair>
      </Row>
      <Row className="mt-[7px]">
        <Pair><Lab>箭头</Lab><Box px={6}><Line /></Box></Pair>
        <Pair><Lab>渐细</Lab><Box px={12}>
          <svg width="16" height="14" viewBox="0 0 16 14"><path d="M1 14c0-7 5-13 14-13-7 2-9 6-10 13z" fill="#444" /></svg>
        </Box></Pair>
      </Row>
      <div className="mt-[12px] ml-[6px] w-[232px] h-[31px] bg-white border border-[#e8e8ec] rounded-[6px] flex items-center justify-center text-[12px] text-[#ccc]">重置样式</div>
    </div>
  </div>
);

const StatusBar = () => (
  <div className="h-[32px] bg-[#eaebf5] flex items-center shrink-0 text-[12px] text-[#333]">
    <div className="w-[48px] flex justify-center border-r border-[#ccccd2] h-[21px] items-center"><PanelRight size={14} strokeWidth={1.2} className="rotate-180 text-[#555]" /></div>
    <div className="ml-[6px] w-[79px] h-[24px] rounded-[6px] bg-[#f2f2f6] flex items-center pl-[5px]">页面-1</div>
    <div className="ml-[6px]"><Caret className="text-[#777]" /></div>
    <div className="ml-[9px] w-px h-[21px] bg-[#ccccd2]" />
    <div className="w-[55px] flex justify-center"><Plus size={16} strokeWidth={1.2} className="text-[#333]" /></div>
    <div className="w-px h-[21px] bg-[#ccccd2]" />
    <div className="w-[77px] text-center text-[#17a589]">页面-1</div>
    <div className="w-px h-[21px] bg-[#ccccd2]" />
  </div>
);

const Watermark = () => (
  <>
    <div className="absolute left-[1444px] top-[984px] w-[476px] h-[55px] bg-white/70" />
    <div className="absolute left-[1450px] top-[1015px] text-[12px] leading-[16px] text-[#999] whitespace-nowrap">[中心主题 1]</div>
    <div className="absolute left-[1459px] top-[932px] font-bold text-[48px] leading-[54px] text-[#ff2d2d] whitespace-nowrap tracking-[0.5px]">电脑技术网</div>
    <div className="absolute left-[1456px] top-[998px] text-[38px] leading-[42px] text-[#2f7ff0] whitespace-nowrap font-['Liberation_Serif',serif]">www.tagxp.com</div>
    <div className="absolute left-[1721px] top-[927px] w-[189px] h-[115px] rounded-[32px] bg-[#2e80f8] overflow-hidden">
      <div className="absolute left-[7px] top-[6px] text-[90px] leading-[96px] tracking-[-5px] font-bold text-white whitespace-nowrap font-['Liberation_Sans',sans-serif]">TAG</div>
      <div className="absolute left-[80px] top-[68px] text-[18px] leading-[20px] font-bold text-white/20 whitespace-nowrap">极光下载站</div>
      <div className="absolute left-[78px] top-[96px] text-[15px] leading-[18px] text-white/20 whitespace-nowrap">www.xz7.com</div>
    </div>
  </>
);

export default function App() {
  return (
    <div className="relative w-[1920px] h-[1046px] overflow-hidden bg-[#e9ebf4] flex flex-col font-['Noto_Sans_CJK_SC','Noto_Sans',sans-serif]">
      <TitleBar />
      <TabRow />
      <Ribbon />
      <DocTabs />
      <div className="flex-1 flex min-h-0">
        <Canvas />
        <Panel />
      </div>
      <StatusBar />
      <div className="h-[7px] bg-[#22363f] flex shrink-0">
        <div className="ml-[743px] w-[160px] bg-[#4a5a61]" />
      </div>
      <Watermark />
      <div className="absolute left-[1340px] top-[990px] w-[61px] h-[26px] rounded-[5px] bg-white border border-[#888] shadow-[0_1px_3px_rgba(0,0,0,0.4)] flex items-center justify-center gap-[3px] text-[12px] text-[#333] whitespace-nowrap">
        <span>CH</span><span>♪</span><span>简</span>
      </div>
    </div>
  );
}
